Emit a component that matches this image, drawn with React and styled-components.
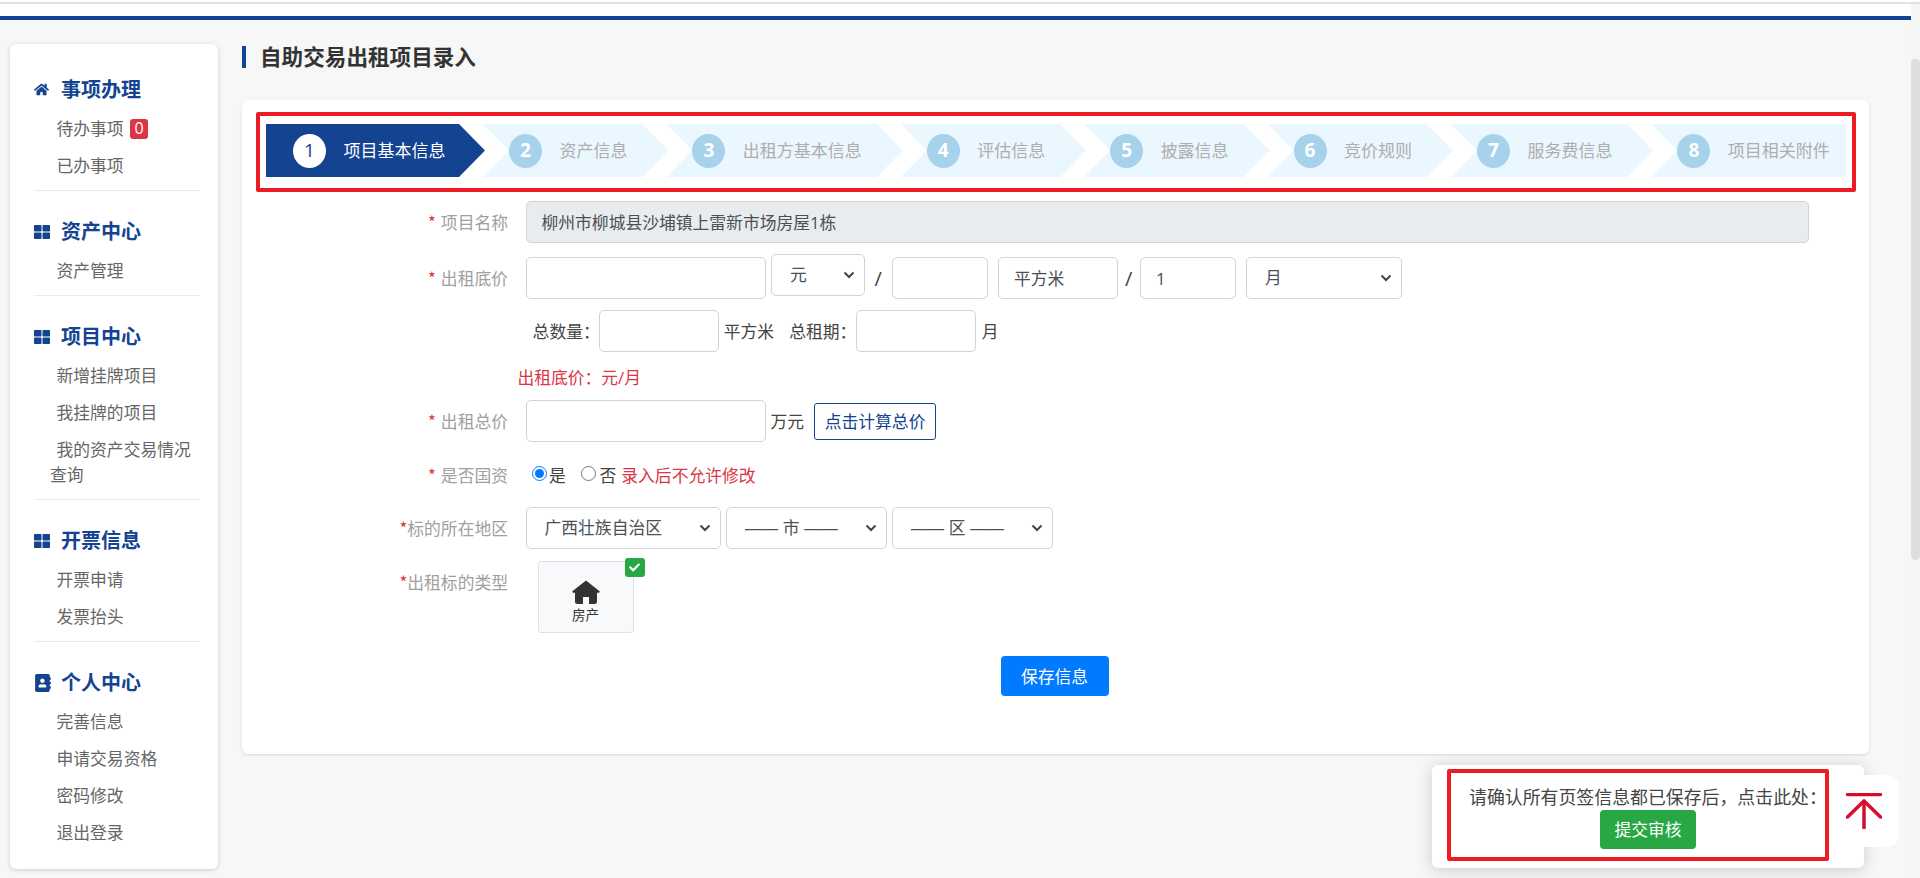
import React from "react";
import styled, { createGlobalStyle } from "styled-components";
import { FaHome, FaThLarge, FaAddressBook, FaCheck } from "react-icons/fa";

const NAV = [
  { title: "事项办理", Icon: FaHome, size: 15, items: ["待办事项", "已办事项"] },
  { title: "资产中心", Icon: FaThLarge, size: 16, items: ["资产管理"] },
  {
    title: "项目中心",
    Icon: FaThLarge,
    size: 16,
    items: ["新增挂牌项目", "我挂牌的项目", "我的资产交易情况查询"],
  },
  { title: "开票信息", Icon: FaThLarge, size: 16, items: ["开票申请", "发票抬头"] },
  {
    title: "个人中心",
    Icon: FaAddressBook,
    size: 18,
    items: ["完善信息", "申请交易资格", "密码修改", "退出登录"],
  },
];

const STEPS = [
  "项目基本信息",
  "资产信息",
  "出租方基本信息",
  "评估信息",
  "披露信息",
  "竞价规则",
  "服务费信息",
  "项目相关附件",
];

const App = () => {
  return (
    <Root>
      <GlobalStyle />
      <TopLine />
      <Body>
        <PageCol>
          <Header />
          <Main>
            <Sidebar>
              {NAV.map(({ title, Icon, size, items }, i) => (
                <NavGroup key={title} $last={i === NAV.length - 1}>
                  <NavTitle>
                    <NavIcon>
                      <Icon size={size} />
                    </NavIcon>
                    {title}
                  </NavTitle>
                  {items.map((item) => (
                    <NavItem key={item}>
                      {item}
                      {item === "待办事项" && <Badge>0</Badge>}
                    </NavItem>
                  ))}
                </NavGroup>
              ))}
            </Sidebar>
            <Content>
              <PageTitle>自助交易出租项目录入</PageTitle>
              <Card>
                <StepFrame>
                  {STEPS.map((step, i) => (
                    <Step key={step} $first={i === 0} $last={i === STEPS.length - 1}>
                      <StepNum $active={i === 0}>{i + 1}</StepNum>
                      <StepText $active={i === 0}>{step}</StepText>
                    </Step>
                  ))}
                </StepFrame>

                <Row $mt={9}>
                  <Label>
                    <Star $gap={5}>*</Star>项目名称
                  </Label>
                  <Input $w={1283.5} $disabled readOnly defaultValue="柳州市柳城县沙埔镇上雷新市场房屋1栋" />
                </Row>

                <Row $mt={14}>
                  <Label>
                    <Star $gap={5}>*</Star>出租底价
                  </Label>
                  <Input $w={240} />
                  <Select $w={93.5} $ml={5.5} $raised defaultValue="元">
                    <option>元</option>
                  </Select>
                  <Slash $w={27.5}>/</Slash>
                  <Input $w={96} />
                  <Input $w={119.5} $ml={10} readOnly defaultValue="平方米" />
                  <Slash $w={22.5}>/</Slash>
                  <Input $w={95.5} readOnly defaultValue="1" />
                  <Select $w={156} $ml={10.5} defaultValue="月">
                    <option>月</option>
                  </Select>
                </Row>

                <Row $mt={11} $pl={276.6}>
                  <Caption $w={66}>{"总数量\uFF1A"}</Caption>
                  <Input $w={120.5} />
                  <Caption $ml={4.7} $w={50.4}>平方米</Caption>
                  <Caption $ml={15} $w={67}>{"总租期\uFF1A"}</Caption>
                  <Input $w={120} />
                  <Caption $ml={5.7}>月</Caption>
                </Row>

                <Note $pl={261.4}>{"出租底价\uFF1A元/月"}</Note>

                <Row $mt={10.5}>
                  <Label>
                    <Star $gap={5}>*</Star>出租总价
                  </Label>
                  <Input $w={240} />
                  <Caption $ml={5} $w={33.6}>万元</Caption>
                  <OutlineButton type="button">点击计算总价</OutlineButton>
                </Row>

                <RadioRow>
                  <Label $short>
                    <Star $gap={5}>*</Star>是否国资
                  </Label>
                  <RadioGroup>
                    <Radio type="radio" name="state" defaultChecked />
                    <Caption $ml={2}>是</Caption>
                    <Radio type="radio" name="state" $ml={15.7} />
                    <Caption $ml={3}>否</Caption>
                    <Note as="span" $inline>录入后不允许修改</Note>
                  </RadioGroup>
                </RadioRow>

                <Row $mt={19.5}>
                  <Label>
                    <Star>*</Star>标的所在地区
                  </Label>
                  <Select $w={195} defaultValue="广西壮族自治区">
                    <option>广西壮族自治区</option>
                  </Select>
                  <Select $w={161} $ml={5} defaultValue="—— 市 ——">
                    <option>—— 市 ——</option>
                  </Select>
                  <Select $w={161} $ml={5} defaultValue="—— 区 ——">
                    <option>—— 区 ——</option>
                  </Select>
                </Row>

                <Row $mt={12} $top>
                  <Label>
                    <Star>*</Star>出租标的类型
                  </Label>
                  <TypeTile>
                    <svg width="28" height="24" viewBox="0 0 28 24" fill="#333">
                      <path d="M14 .5L27.3 11a1 1 0 0 1-.6 1.8H25v8.7a2.5 2.5 0 0 1-2.5 2.5H17v-7h-6v7H5.500A2.500 2.500 0 0 1 3 21.500V12.800H1.300a1 1 0 0 1-.6-1.800z" />
                    </svg>
                    <TileText>房产</TileText>
                    <TileCheck>
                      <FaCheck size={11} color="#fff" />
                    </TileCheck>
                  </TypeTile>
                </Row>

                <SaveRow>
                  <SaveButton type="button">保存信息</SaveButton>
                </SaveRow>
              </Card>
            </Content>
          </Main>
        </PageCol>
        <ScrollTrack>
          <ScrollThumb />
        </ScrollTrack>
      </Body>

      <FloatBar>
        <SubmitPanel>
          <SubmitFrame>
            <SubmitText>{"请确认所有页签信息都已保存后\uFF0C点击此处\uFF1A"}</SubmitText>
            <SubmitButton type="button">提交审核</SubmitButton>
          </SubmitFrame>
        </SubmitPanel>
        <BackTop>
          <svg width="36" height="36" viewBox="0 0 36 36" fill="none" stroke="#d40f2e" strokeWidth="3.5" strokeLinecap="round" strokeLinejoin="round">
            <path d="M1.500 1.500h33" />
            <path d="M18 8v27" />
            <path d="M1.500 24L18 8l16.500 16" />
          </svg>
        </BackTop>
      </FloatBar>
    </Root>
  );
};

export default App;

const BLUE = "#134391";
const CJK = `"Noto Sans CJK SC", sans-serif`;
const FONT = `"Open Sans", ${CJK}`;

const GlobalStyle = createGlobalStyle`
  html, body {
    margin: 0;
    padding: 0;
    background: #f7f7f7;
  }
  * {
    box-sizing: border-box;
  }
`;

const Root = styled.div`
  position: relative;
  width: 1920px;
  height: 878px;
  overflow: hidden;
  background: #f7f7f7;
  font: 400 16.8px/25px ${FONT};
  color: #444;
`;

const TopLine = styled.div`
  height: 4px;
  background: #fff;
  border-bottom: 2px solid #e2e2e2;
`;

const Body = styled.div`
  display: flex;
  height: 874px;
`;

const PageCol = styled.div`
  flex: 1;
  min-width: 0;
`;

const Header = styled.div`
  height: 16px;
  background: #fff;
  border-bottom: 4px solid ${BLUE};
`;

const ScrollTrack = styled.div`
  width: 9px;
  background: #f5f5f5;
  padding-top: 55px;
`;

const ScrollThumb = styled.div`
  height: 501px;
  background: #dedede;
  border-radius: 5px;
`;

const Main = styled.main`
  display: flex;
  align-items: flex-start;
  padding: 24px 0 0 10px;
`;

const Sidebar = styled.aside`
  width: 208px;
  height: 825px;
  padding: 30px 18px 0 24px;
  background: #fff;
  border-radius: 6px;
  box-shadow: 0 1px 4px rgba(0, 0, 0, 0.18);
`;

const NavGroup = styled.div`
  padding-bottom: ${(p) => (p.$last ? 0 : "6px")};
  margin-bottom: ${(p) => (p.$last ? 0 : "25px")};
  border-bottom: ${(p) => (p.$last ? "none" : "1px solid #eaeaea")};
`;

const NavTitle = styled.div`
  display: flex;
  align-items: center;
  height: 30px;
  margin-bottom: 6px;
  padding-top: 1px;
  font-size: 20px;
  font-weight: 700;
  color: ${BLUE};
`;

const NavIcon = styled.span`
  display: flex;
  align-items: center;
  width: 27px;
  color: ${BLUE};
`;

const NavItem = styled.div`
  padding: 6px 0 6px 16px;
  text-indent: 6.5px;
  color: #666;
`;

const Badge = styled.span`
  display: inline-block;
  width: 18px;
  height: 20px;
  margin-left: 6.5px;
  border-radius: 3px;
  background: #dc3545;
  color: #fff;
  font-size: 16px;
  line-height: 19px;
  text-align: center;
  text-indent: 0;
  vertical-align: 1px;
`;

const Content = styled.div`
  width: 1627px;
  margin-left: 24px;
  padding-top: 2px;
`;

const PageTitle = styled.h1`
  height: 22px;
  margin: 0 0 32px;
  padding-left: 14px;
  border-left: 4px solid ${BLUE};
  font-size: 21.6px;
  line-height: 21px;
  font-weight: 700;
  color: #333;
`;

const Card = styled.section`
  height: 654px;
  padding: 12px 13px 0 14px;
  background: #fff;
  border-radius: 6px;
  box-shadow: 0 1px 3px rgba(0, 0, 0, 0.12);
`;

const StepFrame = styled.div`
  display: flex;
  height: 80px;
  padding: 8px 6px 11px;
  border: 4px solid #ed1c24;
  border-radius: 2px;
`;

const Step = styled.div`
  display: flex;
  align-items: center;
  flex: ${(p) => (p.$last ? "1" : "none")};
  height: 53px;
  margin-left: ${(p) => (p.$first ? 0 : "-2.1px")};
  padding: 0 ${(p) => (p.$last ? "13px" : p.$first ? "39.5px" : "41px")} 0 ${(p) => (p.$first ? "27px" : "26px")};
  background: ${(p) => (p.$first ? BLUE : "#ebf7ff")};
  clip-path: ${(p) =>
    p.$first
      ? "polygon(0 0, calc(100% - 26px) 0, 100% 50%, calc(100% - 26px) 100%, 0 100%)"
      : p.$last
        ? "polygon(0 0, 100% 0, 100% 100%, 0 100%, 26px 50%)"
        : "polygon(0 0, calc(100% - 26px) 0, 100% 50%, calc(100% - 26px) 100%, 0 100%, 26px 50%)"};
`;

const StepNum = styled.span`
  display: flex;
  align-items: center;
  justify-content: center;
  flex: none;
  width: 33px;
  height: 34px;
  border-radius: 50%;
  font-size: 19px;
  font-weight: ${(p) => (p.$active ? 400 : 700)};
  background: ${(p) => (p.$active ? "#fff" : "#a6d2ec")};
  color: ${(p) => (p.$active ? BLUE : "#fff")};
`;

const StepText = styled.span`
  margin-left: 17.5px;
  font-size: 17px;
  white-space: nowrap;
  color: ${(p) => (p.$active ? "#fff" : "#aeaeae")};
`;

const Row = styled.div`
  display: flex;
  align-items: ${(p) => (p.$top ? "flex-start" : "center")};
  height: ${(p) => (p.$top ? "72px" : "42px")};
  margin-top: ${(p) => p.$mt}px;
  padding-left: ${(p) => p.$pl || 0}px;
`;

const Label = styled.label`
  display: flex;
  align-items: center;
  justify-content: flex-end;
  flex: none;
  width: 252px;
  height: ${(p) => (p.$short ? "25px" : "42px")};
  margin-right: ${(p) => (p.$short ? "24px" : "17.5px")};
  color: #a0a0a0;
  white-space: pre;
`;

const Star = styled.span`
  margin-right: ${(p) => p.$gap || 0}px;
  font-family: ${CJK};
  color: #dc3545;
`;

const Input = styled.input`
  flex: none;
  width: ${(p) => p.$w}px;
  height: 42px;
  margin-left: ${(p) => p.$ml || 0}px;
  padding: 0 15px;
  border: 1px solid #ced4da;
  border-radius: 5px;
  background: ${(p) => (p.$disabled ? "#e9ecef" : "#fff")};
  font: inherit;
  color: #495057;
  outline: none;
`;

const Select = styled.select`
  flex: none;
  width: ${(p) => p.$w}px;
  height: 42px;
  margin-left: ${(p) => p.$ml || 0}px;
  margin-top: ${(p) => (p.$raised ? "-6px" : 0)};
  padding: 0 24px 0 18px;
  border: 1px solid #ced4da;
  border-radius: 5px;
  background: #fff url("data:image/svg+xml,%3Csvg xmlns='http://www.w3.org/2000/svg' width='12' height='8' viewBox='0 0 12 8' fill='none' stroke='%23444' stroke-width='2'%3E%3Cpath d='M1.5 1.5L6 6l4.5-4.5'/%3E%3C/svg%3E") no-repeat right 9px center;
  font: inherit;
  font-family: "Liberation Sans", ${CJK};
  color: #495057;
  appearance: none;
  outline: none;
`;

const Slash = styled.span`
  flex: none;
  width: ${(p) => p.$w}px;
  font-size: 20px;
  text-align: center;
  color: #444;
`;

const Caption = styled.span`
  flex: none;
  width: ${(p) => (p.$w ? `${p.$w}px` : "auto")};
  margin-left: ${(p) => p.$ml || 0}px;
  color: #444;
  white-space: nowrap;
`;

const Note = styled.div`
  margin-top: ${(p) => (p.$inline ? 0 : "12.5px")};
  margin-left: ${(p) => (p.$inline ? "5px" : 0)};
  padding-left: ${(p) => p.$pl || 0}px;
  height: 25px;
  color: #dc3545;
  white-space: nowrap;
`;

const OutlineButton = styled.button`
  flex: none;
  width: 122px;
  height: 37px;
  margin-left: 10px;
  padding: 0;
  border: 1.5px solid ${BLUE};
  border-radius: 3px;
  background: #fff;
  font: inherit;
  color: ${BLUE};
`;

const RadioRow = styled.div`
  display: flex;
  align-items: center;
  height: 25px;
  margin-top: 20.5px;
`;

const RadioGroup = styled.div`
  display: flex;
  align-items: center;
`;

const Radio = styled.input`
  flex: none;
  width: 15px;
  height: 15px;
  margin: -3px 0 0 ${(p) => p.$ml || 0}px;
  accent-color: #007bff;
`;

const TypeTile = styled.div`
  position: relative;
  display: flex;
  flex-direction: column;
  align-items: center;
  width: 96px;
  height: 72px;
  margin-left: 12px;
  padding-top: 18px;
  border: 1px solid #dee2e6;
  border-radius: 3px;
  background: #f8f9fa;
`;

const TileText = styled.span`
  margin-top: 1px;
  font-size: 13.5px;
  line-height: 20px;
  color: #333;
`;

const TileCheck = styled.span`
  position: absolute;
  top: -4px;
  right: -12px;
  display: flex;
  align-items: center;
  justify-content: center;
  width: 20px;
  height: 19px;
  border-radius: 3px;
  background: #28a745;
`;

const SaveRow = styled.div`
  display: flex;
  justify-content: center;
  margin-top: 23px;
`;

const SaveButton = styled.button`
  width: 108px;
  height: 40px;
  margin-right: 3px;
  padding: 0;
  border: none;
  border-radius: 4px;
  background: #007bff;
  font: inherit;
  color: #fff;
`;

const FloatBar = styled.div`
  position: absolute;
  right: 21px;
  bottom: 10px;
  display: flex;
  align-items: center;
`;

const SubmitPanel = styled.div`
  width: 432.4px;
  height: 103px;
  padding: 4px 35px 7px 15.4px;
  border-radius: 6px;
  background: #fff;
  box-shadow: 0 2px 16px rgba(0, 0, 0, 0.18);
`;

const SubmitFrame = styled.div`
  height: 92px;
  padding: 13px 0 0 18px;
  border: 4px solid #ed1c24;
  border-radius: 2px;
`;

const SubmitText = styled.div`
  font-size: 17.9px;
  line-height: 22px;
  white-space: nowrap;
  color: #444;
`;

const SubmitButton = styled.button`
  display: block;
  width: 96px;
  height: 39px;
  margin: 2px 0 0 131px;
  padding: 0;
  border: none;
  border-radius: 4px;
  background: #28a745;
  font: inherit;
  color: #fff;
`;

const BackTop = styled.div`
  position: relative;
  display: flex;
  align-items: center;
  justify-content: center;
  width: 70px;
  height: 72px;
  margin-left: -35px;
  margin-top: -12px;
  border-radius: 12px;
  background: #fff;
`;
